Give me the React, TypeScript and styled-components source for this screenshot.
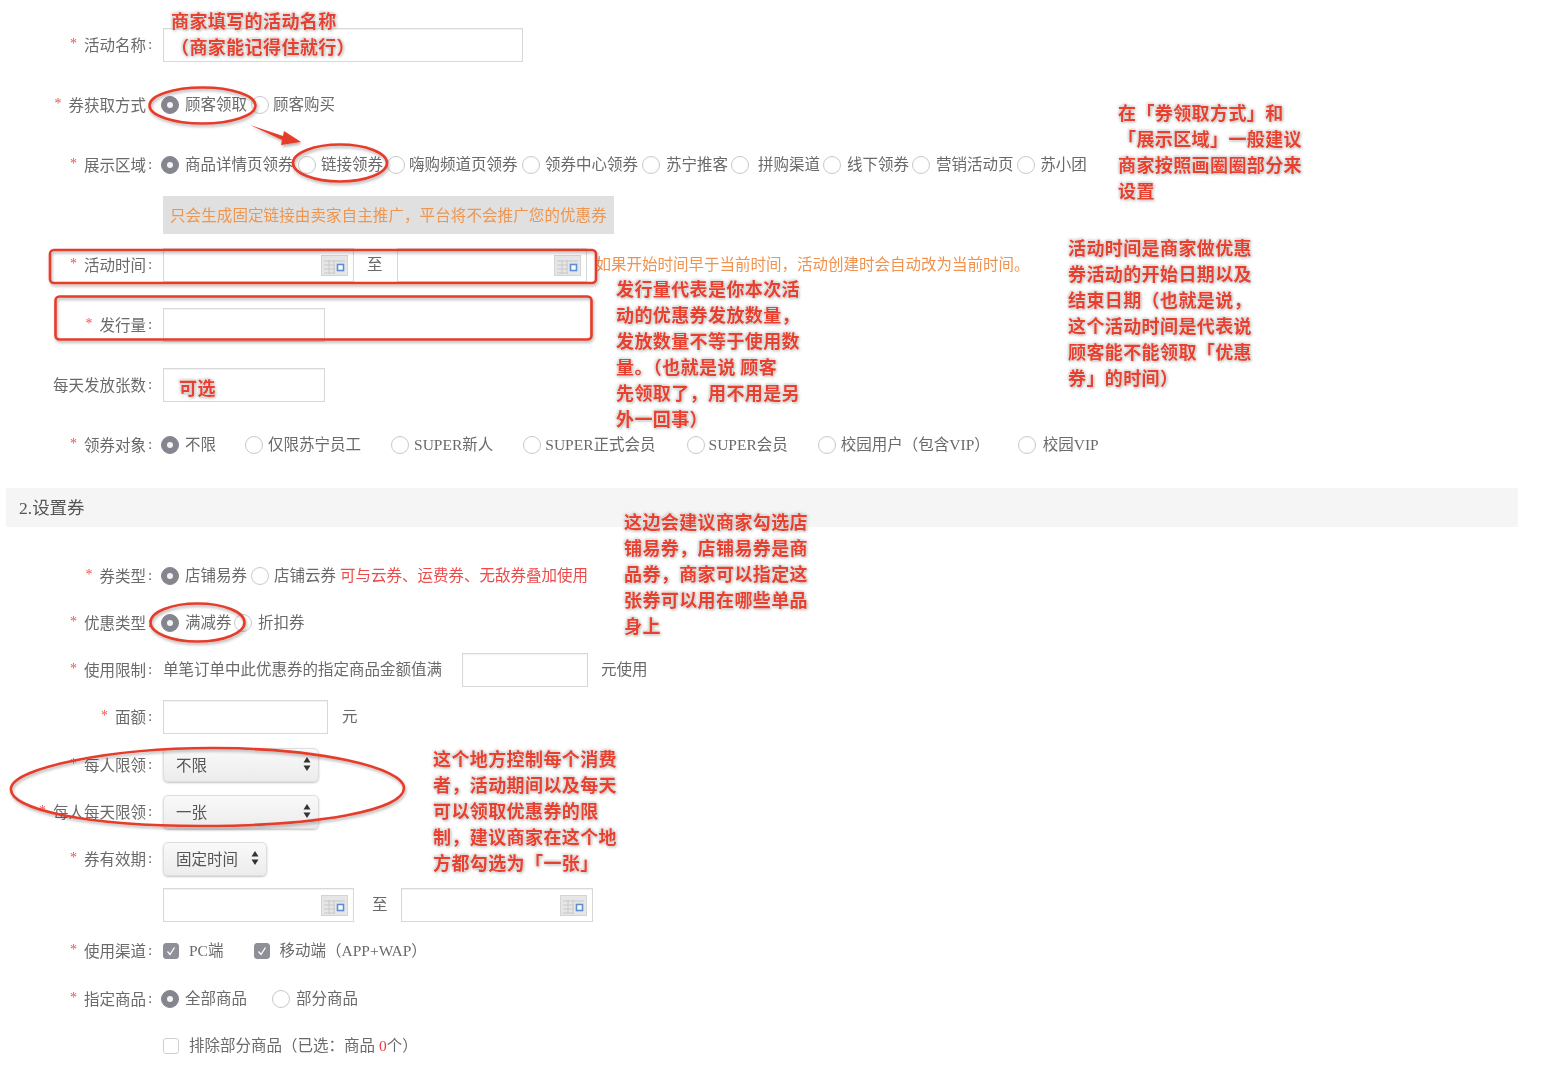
import styled, { createGlobalStyle } from "styled-components";

// full width punctuation, written as escapes so it can't get swapped for ascii
const COMMA = "\uFF0C";
const LP = "\uFF08";
const RP = "\uFF09";
const COLON = "\uFF1A";

const GlobalStyle = createGlobalStyle`
  html, body {
    margin: 0;
    padding: 0;
    background: #fff;
  }
  body {
    font-family: "Liberation Serif", "Noto Sans CJK SC", serif;
    color: #666;
    overflow: hidden;
  }
`;

const Page = styled.div`
  position: relative;
  width: 1548px;
  height: 1078px;
  overflow: hidden;
  padding-top: 28px;
  box-sizing: border-box;
  font-size: 15.5px;
  filter: blur(0.55px);
`;

const Row = styled.div<{ $top?: number; $indent?: boolean }>`
  display: flex;
  align-items: center;
  height: 34px;
  margin-top: ${({ $top }) => $top ?? 13}px;
  padding-left: ${({ $indent }) => ($indent ? 163 : 0)}px;
`;

const LabelCell = styled.div`
  flex: none;
  width: 153px;
  margin-right: 10px;
  padding-bottom: 2px;
  display: flex;
  justify-content: flex-end;
  align-items: center;
  white-space: nowrap;
  color: #6a6a6a;
`;

const Star = styled.span`
  color: #f0524a;
  margin-right: 7px;
  font-size: 14px;
`;

const Colon = styled.span`
  margin-left: 2px;
  width: 5px;
`;

const Controls = styled.div`
  display: flex;
  align-items: center;
  white-space: nowrap;
`;

const TextInput = styled.div<{ $width: number; $left?: number }>`
  box-sizing: border-box;
  width: ${({ $width }) => $width}px;
  height: 34px;
  margin-left: ${({ $left }) => $left ?? 0}px;
  background: #fff;
  border: 1px solid #d8d8d8;
  box-shadow: inset 0 1px 1px #f2f2f2;
  flex: none;
`;

const DateInput = styled(TextInput)`
  display: flex;
  align-items: center;
  justify-content: flex-end;
  padding-right: 5px;
`;

const Plain = styled.span<{ $left?: number; $color?: string }>`
  margin-left: ${({ $left }) => $left ?? 0}px;
  margin-bottom: 4px;
  color: ${({ $color }) => $color ?? "#6a6a6a"};
`;

const Zero = styled.span`
  color: #ee3a3a;
`;

const Option = styled.label<{ $after: number; $gap: number }>`
  display: inline-flex;
  align-items: center;
  gap: ${({ $gap }) => $gap}px;
  margin-right: ${({ $after }) => $after}px;
`;

const OptionText = styled.span`
  margin-bottom: 4px;
  color: #6a6a6a;
`;

const RadioDot = styled.span<{ $on?: boolean }>`
  box-sizing: border-box;
  flex: none;
  position: relative;
  width: 18px;
  height: 18px;
  border-radius: 50%;
  margin-left: -2px;
  margin-right: 2px;
  background: ${({ $on }) => ($on ? "#85858f" : "#fff")};
  border: 1px solid ${({ $on }) => ($on ? "#85858f" : "#c8c8c8")};
  &::after {
    content: "";
    display: ${({ $on }) => ($on ? "block" : "none")};
    position: absolute;
    left: 5px;
    top: 5px;
    width: 6px;
    height: 6px;
    border-radius: 50%;
    background: #f4f4f4;
  }
`;

const CheckBox = styled.span<{ $on?: boolean; $left?: number }>`
  box-sizing: border-box;
  flex: none;
  width: 16px;
  height: 16px;
  margin-left: ${({ $left }) => $left ?? 0}px;
  border-radius: 3px;
  display: inline-flex;
  align-items: center;
  justify-content: center;
  background: ${({ $on }) => ($on ? "#8f8f97" : "#fff")};
  border: 1px solid ${({ $on }) => ($on ? "#8f8f97" : "#cfcfcf")};
`;

const SelectBox = styled.div<{ $width: number }>`
  box-sizing: border-box;
  width: ${({ $width }) => $width}px;
  height: 34px;
  padding: 0 7px 2px 12px;
  display: flex;
  align-items: center;
  justify-content: space-between;
  border-radius: 5px;
  color: #555;
  background: linear-gradient(#f9f9f9, #ececec);
  border: 1px solid #dedede;
  box-shadow: 0 1px 2px #c4c4c4;
`;

const Notice = styled.div`
  box-sizing: border-box;
  width: 451px;
  height: 38px;
  margin: 14px 0 0 163px;
  padding: 0 0 2px 7px;
  display: flex;
  align-items: center;
  background: #e0e0e0;
  color: #ee9650;
  letter-spacing: 0.1px;
  white-space: nowrap;
`;

const SectionBar = styled.div`
  box-sizing: border-box;
  width: 1512px;
  height: 39px;
  margin: 26px 0 32px 6px;
  padding: 0 0 2px 13px;
  display: flex;
  align-items: center;
  background: #f5f5f5;
  color: #555;
  font-size: 17.5px;
`;

const Hint = styled.span`
  margin: 0 0 5px 9px;
  color: #f09250;
`;

const Overlay = styled.svg`
  position: absolute;
  left: 0;
  top: 0;
  pointer-events: none;
`;

const Callout = styled.div<{ $x: number; $y: number }>`
  position: absolute;
  left: ${({ $x }) => $x}px;
  top: ${({ $y }) => $y}px;
  white-space: pre-line;
  font-family: "Noto Sans CJK SC", sans-serif;
  font-weight: 700;
  font-size: 18px;
  letter-spacing: 0.4px;
  line-height: 26px;
  color: #e8402f;
  text-shadow: 0 0 2px #fff, 0 0 3px #c8c8c8, 1px 1px 3px #aaa, -1px -1px 3px #ccc;
`;

const CalendarIcon = () => (
  <svg width="27" height="21" viewBox="0 0 27 21">
    <rect x="0.5" y="0.5" width="26" height="20" fill="#e6e6e6" stroke="#d4d4d4" />
    <path d="M3 6h21M3 10h11M3 14h11M3 18h11M8 5v14M13 5v14" stroke="#c8c8c8" fill="none" />
    <rect x="16.5" y="9.5" width="6" height="6" fill="#fff" stroke="#5a8fd8" strokeWidth="1.6" />
  </svg>
);

const UpDown = () => (
  <svg width="8" height="16" viewBox="0 0 8 16">
    <path d="M4 1 7.5 6.5H.5ZM4 15 .5 9.5h7Z" fill="#333" />
  </svg>
);

const Tick = () => (
  <svg width="12" height="12" viewBox="0 0 12 12">
    <path d="M2.5 6.5 5 9.5 9.5 2.5" fill="none" stroke="#fff" strokeWidth="1.3" />
  </svg>
);

type Choice = { text: string; on?: boolean; after: number; gap?: number };

function Choices({ items }: { items: Choice[] }) {
  return (
    <>
      {items.map((item) => (
        <Option key={item.text} $after={item.after} $gap={item.gap ?? 4}>
          <RadioDot $on={item.on} />
          <OptionText>{item.text}</OptionText>
        </Option>
      ))}
    </>
  );
}

function Label({ text, required = true }: { text: string; required?: boolean }) {
  return (
    <LabelCell>
      {required && <Star>*</Star>}
      {text}
      <Colon>:</Colon>
    </LabelCell>
  );
}

const displayAreas: Choice[] = [
  { text: "商品详情页领券", on: true, after: 6.5 },
  { text: "链接领券", after: 6, gap: 3 },
  { text: "嗨购频道页领券", after: 6.5, gap: 2 },
  { text: "领券中心领券", after: 6, gap: 3 },
  { text: "苏宁推客", after: 5 },
  { text: "拼购渠道", after: 5, gap: 7 },
  { text: "线下领券", after: 5 },
  { text: "营销活动页", after: 5.5 },
  { text: "苏小团", after: 0, gap: 3 },
];

const audiences: Choice[] = [
  { text: "不限", on: true, after: 31 },
  { text: "仅限苏宁员工", after: 32, gap: 3 },
  { text: "SUPER新人", after: 32, gap: 3 },
  { text: "SUPER正式会员", after: 33, gap: 2 },
  { text: "SUPER会员", after: 32, gap: 2 },
  { text: `校园用户${LP}包含VIP${RP}`, after: 30, gap: 3 },
  { text: "校园VIP", after: 0, gap: 5 },
];

const callouts = [
  { x: 171, y: 7, text: `商家填写的活动名称\n${LP}商家能记得住就行${RP}` },
  { x: 179, y: 374, text: "可选" },
  { x: 1118, y: 99, text: "在「券领取方式」和\n「展示区域」一般建议\n商家按照画圈圈部分来\n设置" },
  {
    x: 1068,
    y: 234,
    text: `活动时间是商家做优惠\n券活动的开始日期以及\n结束日期${LP}也就是说${COMMA}\n这个活动时间是代表说\n顾客能不能领取「优惠\n券」的时间${RP}`,
  },
  {
    x: 616,
    y: 275,
    text: `发行量代表是你本次活\n动的优惠券发放数量${COMMA}\n发放数量不等于使用数\n量。${LP}也就是说 顾客\n先领取了${COMMA}用不用是另\n外一回事${RP}`,
  },
  {
    x: 624,
    y: 508,
    text: `这边会建议商家勾选店\n铺易券${COMMA}店铺易券是商\n品券${COMMA}商家可以指定这\n张券可以用在哪些单品\n身上`,
  },
  {
    x: 433,
    y: 745,
    text: `这个地方控制每个消费\n者${COMMA}活动期间以及每天\n可以领取优惠券的限\n制${COMMA}建议商家在这个地\n方都勾选为「一张」`,
  },
];

function Markup() {
  return (
    <Overlay width="1548" height="1078" fill="none" stroke="#e63c2b" strokeWidth="2.6">
      <defs>
        <filter id="soft" x="-10%" y="-20%" width="120%" height="150%">
          <feDropShadow dx="1" dy="2" stdDeviation="1.5" floodColor="#000" floodOpacity="0.3" />
        </filter>
      </defs>
      <g filter="url(#soft)">
        <ellipse cx="202.5" cy="105.5" rx="53" ry="18" />
        <ellipse cx="340" cy="163" rx="47" ry="18.5" />
        <ellipse cx="197.5" cy="622.5" rx="47" ry="19" />
        <path d="M11 788C14 768 110 748 212 748 320 748 404 768 404 788 404 810 320 826 200 826 90 826 8 810 11 788Z" />
        <rect x="50" y="250" width="546" height="33" rx="4" />
        <rect x="55.5" y="296.5" width="536" height="43" rx="4" />
        <path d="M250 125 283 136 284 131 301 142 281 145 282 140Z" fill="#e63c2b" stroke="none" />
      </g>
    </Overlay>
  );
}

export default function App() {
  return (
    <Page>
      <GlobalStyle />

      <Row $top={0}>
        <Label text="活动名称" />
        <TextInput $width={360} />
      </Row>

      <Row $top={26}>
        <Label text="券获取方式" />
        <Controls>
          <Choices
            items={[
              { text: "顾客领取", on: true, after: 6 },
              { text: "顾客购买", after: 0, gap: 2 },
            ]}
          />
        </Controls>
      </Row>

      <Row $top={26}>
        <Label text="展示区域" />
        <Controls>
          <Choices items={displayAreas} />
        </Controls>
      </Row>

      <Notice>{`只会生成固定链接由卖家自主推广${COMMA}平台将不会推广您的优惠券`}</Notice>

      <Row $top={14}>
        <Label text="活动时间" />
        <Controls>
          <DateInput $width={191}>
            <CalendarIcon />
          </DateInput>
          <Plain $left={13}>至</Plain>
          <DateInput $width={190} $left={14}>
            <CalendarIcon />
          </DateInput>
          <Hint>{`如果开始时间早于当前时间${COMMA}活动创建时会自动改为当前时间。`}</Hint>
        </Controls>
      </Row>

      <Row $top={26}>
        <Label text="发行量" />
        <TextInput $width={162} />
      </Row>

      <Row $top={26}>
        <Label text="每天发放张数" required={false} />
        <TextInput $width={162} />
      </Row>

      <Row $top={26}>
        <Label text="领券对象" />
        <Controls>
          <Choices items={audiences} />
        </Controls>
      </Row>

      <SectionBar>2.设置券</SectionBar>

      <Row $top={0}>
        <Label text="券类型" />
        <Controls>
          <Choices
            items={[
              { text: "店铺易券", on: true, after: 6 },
              { text: "店铺云券", after: 4, gap: 3 },
            ]}
          />
          <Plain $color="#ee4a4a">可与云券、运费券、无敌券叠加使用</Plain>
        </Controls>
      </Row>

      <Row>
        <Label text="优惠类型" />
        <Controls>
          <Choices
            items={[
              { text: "满减券", on: true, after: 4.5 },
              { text: "折扣券", after: 0 },
            ]}
          />
        </Controls>
      </Row>

      <Row>
        <Label text="使用限制" />
        <Controls>
          <Plain>单笔订单中此优惠券的指定商品金额值满</Plain>
          <TextInput $width={126} $left={20} />
          <Plain $left={13}>元使用</Plain>
        </Controls>
      </Row>

      <Row>
        <Label text="面额" />
        <Controls>
          <TextInput $width={165} />
          <Plain $left={14}>元</Plain>
        </Controls>
      </Row>

      <Row $top={14}>
        <Label text="每人限领" />
        <SelectBox $width={156}>
          不限
          <UpDown />
        </SelectBox>
      </Row>

      <Row>
        <Label text="每人每天限领" />
        <SelectBox $width={156}>
          一张
          <UpDown />
        </SelectBox>
      </Row>

      <Row>
        <Label text="券有效期" />
        <SelectBox $width={104}>
          固定时间
          <UpDown />
        </SelectBox>
      </Row>

      <Row $top={12} $indent>
        <DateInput $width={191}>
          <CalendarIcon />
        </DateInput>
        <Plain $left={18}>至</Plain>
        <DateInput $width={192} $left={13}>
          <CalendarIcon />
        </DateInput>
      </Row>

      <Row $top={12}>
        <Label text="使用渠道" />
        <Controls>
          <CheckBox $on>
            <Tick />
          </CheckBox>
          <Plain $left={10}>PC端</Plain>
          <CheckBox $on $left={31}>
            <Tick />
          </CheckBox>
          <Plain $left={9}>{`移动端${LP}APP+WAP${RP}`}</Plain>
        </Controls>
      </Row>

      <Row $top={14}>
        <Label text="指定商品" />
        <Controls>
          <Choices
            items={[
              { text: "全部商品", on: true, after: 27 },
              { text: "部分商品", after: 0 },
            ]}
          />
        </Controls>
      </Row>

      <Row $indent>
        <CheckBox />
        <Plain $left={10}>
          {`排除部分商品${LP}已选${COLON}商品 `}
          <Zero>0</Zero>
          {`个${RP}`}
        </Plain>
      </Row>

      <Markup />
      {callouts.map((note) => (
        <Callout key={note.x} $x={note.x} $y={note.y}>
          {note.text}
        </Callout>
      ))}
    </Page>
  );
}
